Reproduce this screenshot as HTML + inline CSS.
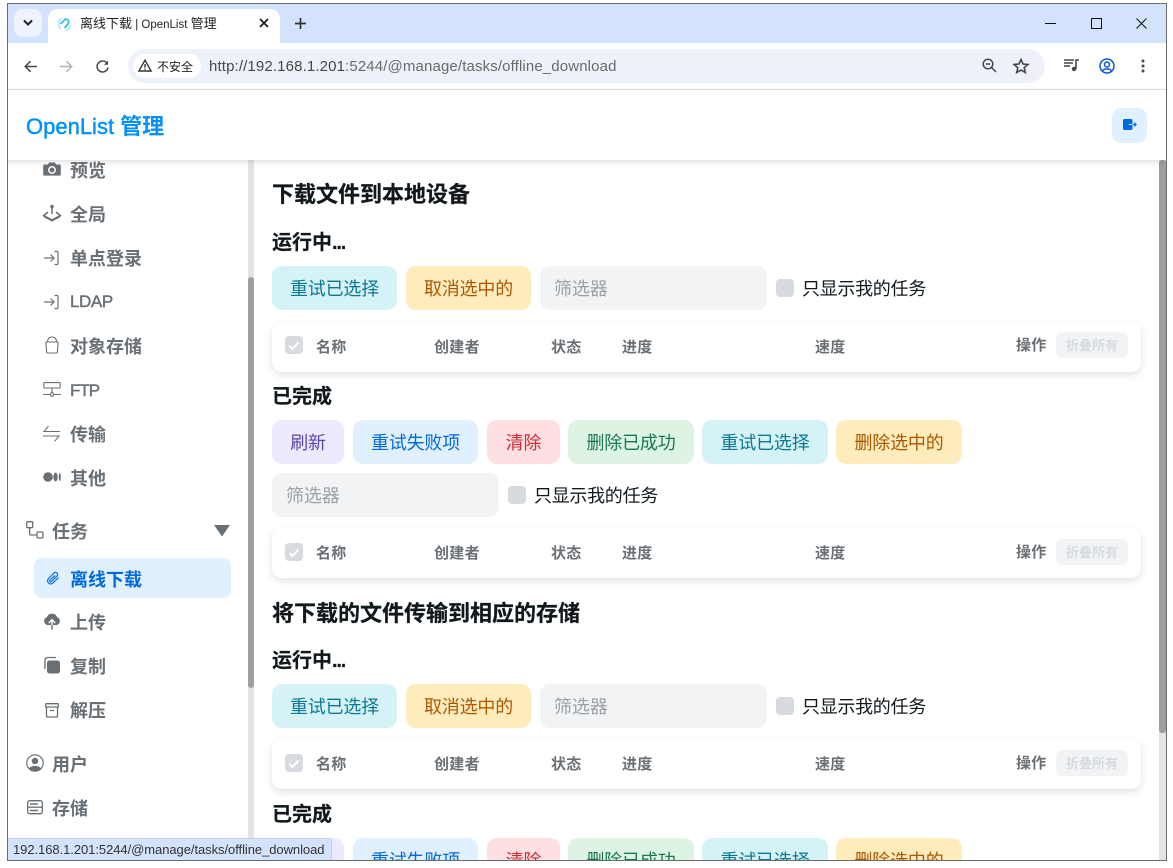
<!DOCTYPE html>
<html lang="zh"><head><meta charset="utf-8"><title>离线下载 | OpenList 管理</title>
<style>
*{box-sizing:border-box;margin:0;padding:0}
html,body{width:1173px;height:868px;overflow:hidden;background:#fff;font-family:"Liberation Sans","Noto Sans CJK SC",sans-serif}
.a{position:absolute}
.t{position:absolute;white-space:nowrap;line-height:1}
#win{position:absolute;left:7px;top:3px;width:1160px;height:858px;overflow:hidden;background:#fff;border:1px solid #6c6c6c;border-bottom:1px solid #6c6c6c}
#root{position:absolute;left:-8px;top:-4px;width:1173px;height:868px}
.side{font-size:18px;font-weight:700;color:#687076}
.lat{font-size:17px;font-weight:400;-webkit-text-stroke:.4px #687076;letter-spacing:-.4px}
.b{position:absolute;height:44px;border-radius:10px;font-size:18px;line-height:46px;text-align:center;white-space:nowrap;letter-spacing:-.2px;overflow:hidden}
.cy{background:#d5f3f7;color:#0c7792}.ye{background:#ffecbc;color:#ad5700}.pu{background:#ede9fe;color:#5746af}.bl{background:#e0f0ff;color:#006adc}.re{background:#ffe0e2;color:#cd2b31}.gr{background:#ddf3e4;color:#18794e}
.f{position:absolute;width:227px;height:44px;border-radius:10px;background:#f1f3f5;color:#9ba1a6;font-size:18px;line-height:46px;padding-left:14px;letter-spacing:-.1px}
.cb{position:absolute;width:18px;height:18px;border-radius:4px;background:#d7dbdf}
.h1{font-size:22px;font-weight:700;color:#11181c;-webkit-text-stroke:.25px #11181c}
.h2{font-size:20px;font-weight:700;color:#11181c;-webkit-text-stroke:.2px #11181c}
.h2 i{font-style:normal;letter-spacing:-1.200px}
.lb{font-size:18px;color:#11181c;letter-spacing:-.3px}
.card{position:absolute;left:272px;width:869px;height:50px;border-radius:10px;background:#fff;box-shadow:0 3px 8px rgba(0,0,0,.12)}
.th{font-size:15px;font-weight:700;color:#687076;letter-spacing:.3px}
.fold{position:absolute;left:784px;top:10px;width:72px;height:26px;border-radius:7px;background:#f1f3f5;color:#d7dbdf;font-size:13px;line-height:27px;text-align:center;font-weight:700}
svg{position:absolute;overflow:visible}
</style></head><body>
<div id="win"><div id="root">

<!-- browser chrome -->
<div class="a" style="left:0;top:0;width:1173px;height:43px;background:#d3e3fd"></div>
<div class="a" style="left:14px;top:9px;width:28px;height:28px;border-radius:9px;background:#edf2fc"></div>
<svg style="left:23px;top:19px" width="10" height="8" fill="none" stroke="#1f1f1f" stroke-width="2"><path d="M1 1.500l4 4 4-4"/></svg>
<div class="a" style="left:48px;top:9px;width:232px;height:34px;background:#fff;border-radius:10px 10px 0 0"></div>
<svg style="left:58px;top:17px" width="13" height="14" viewBox="0 0 13 14" fill="none" stroke-width="1.800"><path d="M4 1.500C0 3 -.5 9 3 12" stroke="#a5eef2"/><path d="M2.500 7L7 2.500C10 1.500 11.500 4 10 7L6.500 11" stroke="#3db5e6"/><path d="M7.500 13c3 0 5-2.500 5-5" stroke="#a5eef2"/></svg>
<div class="t" style="left:80px;top:17px;font-size:13px;color:#1f1f1f">离线下载<span style="font-size:11.500px"> | OpenList </span>管理</div>
<svg style="left:259px;top:18px" width="10" height="10" stroke="#1f1f1f" stroke-width="1.800"><path d="M1 1l8 8M9 1l-8 8"/></svg>
<svg style="left:295px;top:18px" width="11" height="11" stroke="#333" stroke-width="1.700"><path d="M5.500 0v11M0 5.500h11"/></svg>
<svg style="left:1045px;top:23px" width="11" height="2"><path d="M0 .5h11" stroke="#111" stroke-width="1"/></svg>
<svg style="left:1091px;top:18px" width="11" height="11" fill="none" stroke="#111"><rect x=".5" y=".5" width="10" height="10"/></svg>
<svg style="left:1136px;top:18px" width="11" height="11" fill="none" stroke="#111"><path d="M.5.5l10 10M10.500.5l-10 10"/></svg>

<div class="a" style="left:0;top:43px;width:1173px;height:47px;background:#fff;border-bottom:1px solid #e2e2e2;border-radius:10px 10px 0 0"></div>
<svg style="left:24px;top:60px" width="13" height="13" fill="none" stroke="#474747" stroke-width="1.500"><path d="M13 6.500H1.500M6.500 1.200L1.200 6.500l5.300 5.300"/></svg>
<svg style="left:60px;top:60px" width="13" height="13" fill="none" stroke="#b4b4b4" stroke-width="1.500"><path d="M0 6.500h11.500M6.500 1.200l5.300 5.300-5.300 5.300"/></svg>
<svg style="left:96px;top:60px" width="13" height="13" fill="none" stroke="#474747" stroke-width="1.500"><path d="M11.500 4A5.500 5.500 0 1 0 12 7.500"/><path d="M12 .5v4.200H8z" fill="#474747" stroke="none"/></svg>
<div class="a" style="left:128px;top:49px;width:917px;height:34px;border-radius:17px;background:#edf2fa"></div>
<div class="a" style="left:133px;top:54px;width:68px;height:24px;border-radius:12px;background:#fff"></div>
<svg style="left:138px;top:59px" width="14" height="13" fill="none" stroke="#333" stroke-width="1.400"><path d="M7 1.200L.9 12h12.200z"/><path d="M7 5v3.600M7 9.500v1.200"/></svg>
<div class="t" style="left:157px;top:61px;font-size:12px;color:#1f1f1f">不安全</div>
<div class="t" style="left:209px;top:59px;font-size:15px;color:#474747;letter-spacing:.13px">http://192.168.1.201<span style="color:#6a6a6a">:5244/@manage/tasks/offline_download</span></div>
<svg style="left:982px;top:58px" width="15" height="15" fill="none" stroke="#474747" stroke-width="1.500"><circle cx="6" cy="6" r="4.800"/><path d="M9.500 9.500l4.500 4.500M3.800 6h4.400"/></svg>
<svg style="left:1013px;top:58px" width="16" height="15" fill="none" stroke="#474747" stroke-width="1.600"><path d="M8 1.500l2 4.500 4.900.5-3.700 3.200 1.100 4.800L8 12l-4.300 2.500 1.100-4.800L1.100 6.500 6 6z"/></svg>
<svg style="left:1064px;top:59px" width="16" height="13" fill="none" stroke="#474747" stroke-width="1.400"><path d="M0 1h10M0 4h9M0 7h6"/><circle cx="10" cy="10" r="2.200" fill="#474747" stroke="none"/><path d="M12 10V1h3" stroke-width="1.600"/></svg>
<svg style="left:1099px;top:58px" width="16" height="16" fill="none" stroke="#0b57d0" stroke-width="1.500"><circle cx="8" cy="8" r="7"/><circle cx="8" cy="6.500" r="2.500"/><path d="M3.500 12.500c2-2.200 7-2.200 9 0"/></svg>
<svg style="left:1141px;top:59px" width="4" height="14" fill="#474747"><circle cx="2" cy="2" r="1.500"/><circle cx="2" cy="7" r="1.500"/><circle cx="2" cy="12" r="1.500"/></svg>

<!-- sidebar items -->
<svg style="left:43px;top:162px" width="18" height="15" viewBox="0 0 18 15"><path d="M1.500 2.500H5L6 .5h6l1 2h3.500a1.300 1.300 0 0 1 1.300 1.300v8.500a1.300 1.300 0 0 1-1.300 1.300h-15A1.300 1.300 0 0 1 .2 12.300V3.800a1.300 1.300 0 0 1 1.300-1.300z" fill="#687076"/><circle cx="9" cy="8" r="3.200" fill="none" stroke="#fff" stroke-width="1.500"/></svg>
<div class="t side" style="left:70px;top:162px">预览</div>
<svg style="left:43px;top:204px" width="18" height="18" viewBox="0 0 18 18" fill="none" stroke="#687076" stroke-width="1.500"><circle cx="9" cy="2.500" r="1.800" fill="#687076" stroke="none"/><path d="M9 3v7"/><path d="M5 8L.7 11.500 9 16l8.300-4.500L13 8"/><path d="M.7 12.500L9 17l8.300-4.500" stroke-width="1"/></svg>
<div class="t side" style="left:70px;top:206px">全局</div>
<svg style="left:44px;top:250px" width="16" height="16" viewBox="0 0 16 16" fill="none" stroke="#687076" stroke-width="1.200"><path d="M0 8h10M6.500 4.500L10 8l-3.500 3.500M10.500 1.500H13a1 1 0 0 1 1 1v11a1 1 0 0 1-1 1h-2.500"/></svg>
<div class="t side" style="left:70px;top:250px">单点登录</div>
<svg style="left:44px;top:294px" width="16" height="16" viewBox="0 0 16 16" fill="none" stroke="#687076" stroke-width="1.200"><path d="M0 8h10M6.500 4.500L10 8l-3.500 3.500M10.500 1.500H13a1 1 0 0 1 1 1v11a1 1 0 0 1-1 1h-2.500"/></svg>
<div class="t side lat" style="left:70px;top:293px">LDAP</div>
<svg style="left:45px;top:336px" width="14" height="18" viewBox="0 0 14 18" fill="none" stroke="#687076" stroke-width="1.100"><path d="M.8 6h12.400M2.500 6c0-3 1.500-5 4.500-5s4.500 2 4.500 5M.8 6l.8 9.500a1.500 1.500 0 0 0 1.500 1.500h7.800a1.500 1.500 0 0 0 1.500-1.500L13.200 6"/></svg>
<div class="t side" style="left:70px;top:338px">对象存储</div>
<svg style="left:43px;top:382px" width="18" height="16" viewBox="0 0 18 16" fill="none" stroke="#687076" stroke-width="1.100"><rect x=".8" y=".6" width="16.400" height="5.400" rx="1"/><path d="M9 6v5M0 12.500h6.500M11.500 12.500H18"/><circle cx="9" cy="12.500" r="1.800"/></svg>
<div class="t side lat" style="left:70px;top:382px;letter-spacing:-1px">FTP</div>
<svg style="left:43px;top:425px" width="17" height="18" viewBox="0 0 17 18" fill="none" stroke="#687076" stroke-width="1"><path d="M17 6.500H1L5.500 1M0 11h16l-4.500 5.500"/></svg>
<div class="t side" style="left:70px;top:426px">传输</div>
<svg style="left:43px;top:471px" width="18" height="12" viewBox="0 0 18 12" fill="#687076"><circle cx="5" cy="6" r="4.800"/><ellipse cx="12.500" cy="6" rx="2.200" ry="4.500"/><ellipse cx="16.800" cy="6" rx="1" ry="4"/></svg>
<div class="t side" style="left:70px;top:470px">其他</div>

<svg style="left:26px;top:521px" width="18" height="18" viewBox="0 0 18 18" fill="none" stroke="#687076" stroke-width="1.300"><rect x=".7" y=".7" width="6" height="6" rx="1"/><rect x="11" y="11" width="6" height="6" rx="1"/><path d="M3.700 7v6a1 1 0 0 0 1 1H11"/></svg>
<div class="t side" style="left:52px;top:523px">任务</div>
<svg style="left:214px;top:525px" width="16" height="12"><path d="M0 0h16L8 11.500z" fill="#687076"/></svg>

<div class="a" style="left:34px;top:558px;width:197px;height:40px;border-radius:8px;background:#e0f0ff"></div>
<svg style="left:46px;top:571px" width="14" height="14" viewBox="0 0 14 14" fill="none" stroke="#006adc" stroke-width="1.200"><path d="M12.500 6.500L7 12a3 3 0 0 1-4.500-4.500L8 2a2 2 0 0 1 3 3L5.500 10.500a1 1 0 0 1-1.500-1.500L9 4.500"/></svg>
<div class="t side" style="left:70px;top:571px;color:#006adc">离线下载</div>
<svg style="left:43px;top:613px" width="18" height="17" viewBox="0 0 18 17"><path d="M4.500 12A4 4 0 0 1 3.800 4.300 5.500 5.500 0 0 1 14.200 4.300 4 4 0 0 1 13.500 12z" fill="#687076"/><path d="M9 17V7M5.800 10L9 6.800l3.200 3.200" fill="none" stroke="#fff" stroke-width="1.400"/><path d="M9 16.500V12" stroke="#687076" stroke-width="1.400"/></svg>
<div class="t side" style="left:70px;top:614px">上传</div>
<svg style="left:44px;top:657px" width="16" height="17" viewBox="0 0 16 17"><rect x="3" y="3.500" width="13" height="13" rx="2.500" fill="#687076"/><path d="M1 12V3a2.500 2.500 0 0 1 2.500-2.500H12" fill="none" stroke="#687076" stroke-width="1.300"/></svg>
<div class="t side" style="left:70px;top:658px">复制</div>
<svg style="left:45px;top:703px" width="14" height="15" viewBox="0 0 14 15" fill="none" stroke="#687076" stroke-width="1.300"><rect x=".7" y=".7" width="12.600" height="3.300" rx=".5"/><path d="M1.500 4v9a1 1 0 0 0 1 1h9a1 1 0 0 0 1-1V4M5 7.500h4"/></svg>
<div class="t side" style="left:70px;top:702px">解压</div>

<svg style="left:26px;top:754px" width="18" height="18" viewBox="0 0 18 18"><circle cx="9" cy="9" r="8.200" fill="none" stroke="#687076" stroke-width="1.200"/><circle cx="9" cy="7" r="3.200" fill="#687076"/><path d="M3 14.500c2-3.500 10-3.500 12 0a8 8 0 0 1-12 0z" fill="#687076"/></svg>
<div class="t side" style="left:52px;top:756px">用户</div>
<svg style="left:27px;top:800px" width="16" height="15" viewBox="0 0 16 15" fill="none" stroke="#687076" stroke-width="1.300"><rect x=".7" y=".7" width="14.600" height="13" rx="2"/><path d="M1 7.200h14"/><path d="M3 4h8M3 10.500h8" stroke-width="1.500"/></svg>
<div class="t side" style="left:52px;top:800px">存储</div>

<!-- sidebar scrollbar -->
<div class="a" style="left:248px;top:160px;width:6px;height:708px;background:#e4e4e4"></div>
<div class="a" style="left:248px;top:277px;width:6px;height:411px;background:#9e9e9e;border-radius:3px"></div>
<!-- main scrollbar -->
<div class="a" style="left:1159px;top:160px;width:7px;height:708px;background:#e4e4e4"></div>
<div class="a" style="left:1159px;top:160px;width:7px;height:573px;background:#9e9e9e;border-radius:3px"></div>

<!-- main -->
<div class="t h1" style="left:272px;top:184px">下载文件到本地设备</div>
<div class="t h2" style="left:272px;top:233px">运行中<i>...</i></div>
<div class="b cy" style="left:272px;top:266px;width:125px">重试已选择</div>
<div class="b ye" style="left:406px;top:266px;width:125px">取消选中的</div>
<div class="f" style="left:540px;top:266px">筛选器</div>
<div class="cb" style="left:776px;top:279px"></div>
<div class="t lb" style="left:802px;top:280px">只显示我的任务</div>
<div class="card" style="top:322px">
<div class="cb" style="left:13px;top:14px"></div><svg style="left:16px;top:19px" width="12" height="10" fill="none" stroke="#fff" stroke-width="2"><path d="M1.500 5l3 3 6-6.500"/></svg>
<div class="t th" style="left:44px;top:18px">名称</div><div class="t th" style="left:162px;top:18px">创建者</div><div class="t th" style="left:279px;top:18px">状态</div><div class="t th" style="left:350px;top:18px">进度</div><div class="t th" style="left:543px;top:18px">速度</div><div class="t th" style="left:744px;top:16px">操作</div><div class="fold">折叠所有</div></div>

<div class="t h2" style="left:272px;top:387px">已完成</div>
<div class="b pu" style="left:272px;top:420px;width:72px">刷新</div>
<div class="b bl" style="left:353px;top:420px;width:125px">重试失败项</div>
<div class="b re" style="left:487px;top:420px;width:73px">清除</div>
<div class="b gr" style="left:568px;top:420px;width:126px">删除已成功</div>
<div class="b cy" style="left:702px;top:420px;width:126px">重试已选择</div>
<div class="b ye" style="left:836px;top:420px;width:126px">删除选中的</div>
<div class="f" style="left:272px;top:473px">筛选器</div>
<div class="cb" style="left:508px;top:486px"></div>
<div class="t lb" style="left:534px;top:487px">只显示我的任务</div>
<div class="card" style="top:528px">
<div class="cb" style="left:13px;top:15px"></div><svg style="left:16px;top:20px" width="12" height="10" fill="none" stroke="#fff" stroke-width="2"><path d="M1.500 5l3 3 6-6.500"/></svg>
<div class="t th" style="left:44px;top:18px">名称</div><div class="t th" style="left:162px;top:18px">创建者</div><div class="t th" style="left:279px;top:18px">状态</div><div class="t th" style="left:350px;top:18px">进度</div><div class="t th" style="left:543px;top:18px">速度</div><div class="t th" style="left:744px;top:17px">操作</div><div class="fold" style="top:11px">折叠所有</div></div>

<div class="t h1" style="left:272px;top:603px">将下载的文件传输到相应的存储</div>
<div class="t h2" style="left:272px;top:651px">运行中<i>...</i></div>
<div class="b cy" style="left:272px;top:684px;width:125px">重试已选择</div>
<div class="b ye" style="left:406px;top:684px;width:125px">取消选中的</div>
<div class="f" style="left:540px;top:684px">筛选器</div>
<div class="cb" style="left:776px;top:697px"></div>
<div class="t lb" style="left:802px;top:698px">只显示我的任务</div>
<div class="card" style="top:739px">
<div class="cb" style="left:13px;top:15px"></div><svg style="left:16px;top:20px" width="12" height="10" fill="none" stroke="#fff" stroke-width="2"><path d="M1.500 5l3 3 6-6.500"/></svg>
<div class="t th" style="left:44px;top:18px">名称</div><div class="t th" style="left:162px;top:18px">创建者</div><div class="t th" style="left:279px;top:18px">状态</div><div class="t th" style="left:350px;top:18px">进度</div><div class="t th" style="left:543px;top:18px">速度</div><div class="t th" style="left:744px;top:17px">操作</div><div class="fold" style="top:11px">折叠所有</div></div>

<div class="t h2" style="left:272px;top:805px">已完成</div>
<div class="b pu" style="left:272px;top:838px;width:72px">刷新</div>
<div class="b bl" style="left:353px;top:838px;width:125px">重试失败项</div>
<div class="b re" style="left:487px;top:838px;width:73px">清除</div>
<div class="b gr" style="left:568px;top:838px;width:126px">删除已成功</div>
<div class="b cy" style="left:702px;top:838px;width:126px">重试已选择</div>
<div class="b ye" style="left:836px;top:838px;width:126px">删除选中的</div>

<!-- header -->
<div class="a" style="left:0;top:90px;width:1173px;height:70px;background:#fff;box-shadow:0 2px 6px rgba(0,0,0,.13)"></div>
<div class="t" style="left:26px;top:116px;font-size:22px;font-weight:700;color:#0091ff"><span style="font-weight:400;-webkit-text-stroke:.45px #0091ff">OpenList</span> 管理</div>
<div class="a" style="left:1112px;top:108px;width:35px;height:35px;border-radius:9px;background:#e0f0ff"></div>
<svg style="left:1123px;top:118px" width="14" height="13" viewBox="0 0 14 13"><rect x="0" y="1" width="9.500" height="11" rx="1.500" fill="#006adc"/><path d="M5 6.500h8M11 4.500l2.200 2-2.200 2" fill="none" stroke="#006adc" stroke-width="1.100"/><path d="M6 6.500h3.500" stroke="#e0f0ff" stroke-width="1"/></svg>

<!-- status bubble -->
<div class="a" style="left:8px;top:838px;width:324px;height:22px;background:#d3e3fd;border:1px solid #c4cfe2;border-left:0;border-bottom:0;border-radius:0 3px 0 0;font-size:13px;line-height:22px;color:#333;padding-left:5px;white-space:nowrap;letter-spacing:-.06px">192.168.1.201:5244/@manage/tasks/offline_download</div>

</div></div>
</body></html>
